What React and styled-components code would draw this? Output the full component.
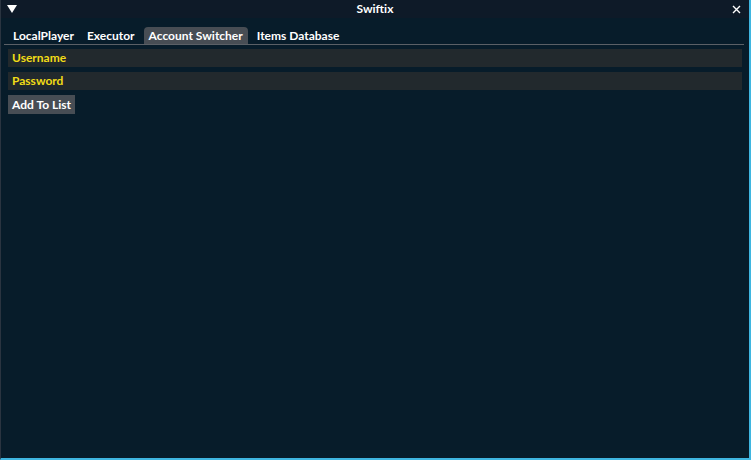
import React from 'react';
import styled, { createGlobalStyle } from 'styled-components';

const GlobalStyle = createGlobalStyle`
  html, body {
    margin: 0;
    padding: 0;
    background: #071c2a;
  }
  * {
    box-sizing: border-box;
  }
`;

const tabs = ['LocalPlayer', 'Executor', 'Account Switcher', 'Items Database'];

export default function App() {
  return (
    <>
      <GlobalStyle />
      <Window>
        <TitleBar>
          <Collapse>
            <svg width="10" height="8" viewBox="0 0 10 8">
              <polygon points="0,0 10,0 5,8" fill="#ffffff" />
            </svg>
          </Collapse>
          <Title>Swiftix</Title>
          <Close>
            <svg width="9" height="9" viewBox="0 0 9 9">
              <path d="M1 1 L8 8 M8 1 L1 8" stroke="#ffffff" strokeWidth="1.4" />
            </svg>
          </Close>
        </TitleBar>
        <Body>
          <TabBar>
            {tabs.map(t => (
              <Tab key={t} $active={t === 'Account Switcher'}>{t}</Tab>
            ))}
          </TabBar>
          <Field>Username</Field>
          <Field>Password</Field>
          <Button>Add To List</Button>
        </Body>
      </Window>
    </>
  );
}

const Window = styled.div`
  width: 751px;
  height: 460px;
  display: flex;
  flex-direction: column;
  background: #071c2a;
  border-left: 1px solid #2a3440;
  border-right: 2px solid #3fb6e0;
  border-bottom: 2px solid #3fb6e0;
  font-family: Lato, "Open Sans", sans-serif;
  font-weight: 700;
  font-size: 12px;
  color: #ffffff;
  overflow: hidden;
`;

const TitleBar = styled.header`
  height: 18px;
  display: grid;
  grid-template-columns: 1fr auto 1fr;
  align-items: center;
  background: #0e1a28;
  padding: 0 8px 0 6px;
`;

const Collapse = styled.div`
  display: flex;
  align-items: center;
  svg { display: block; }
`;

const Title = styled.div`
  line-height: 18px;
  padding-left: 2px;
`;

const Close = styled.div`
  display: flex;
  justify-content: flex-end;
  svg { display: block; }
`;

const Body = styled.main`
  display: flex;
  flex-direction: column;
  align-items: flex-start;
  gap: 5px;
  padding: 9px 7px 0 7px;
`;

const TabBar = styled.nav`
  display: flex;
  align-items: flex-end;
  gap: 5px;
  align-self: stretch;
  margin-left: -4px;
  padding-left: 5px;
  margin-right: -2px;
  border-bottom: 1px solid #5b6066;
  margin-bottom: -1px;
`;

const Tab = styled.div`
  height: 17px;
  line-height: 17px;
  padding: 0 ${p => (p.$active ? '5px' : '4px')};
  border-radius: 4px 4px 0 0;
  background: ${p => (p.$active ? '#474d54' : 'transparent')};
  white-space: nowrap;
`;

const Field = styled.div`
  align-self: stretch;
  height: 18px;
  line-height: 18px;
  padding: 0 4px;
  background: #22292d;
  color: #f2dc16;
`;

const Button = styled.div`
  height: 19px;
  line-height: 19px;
  padding: 0 4px;
  background: #474d54;
`;
